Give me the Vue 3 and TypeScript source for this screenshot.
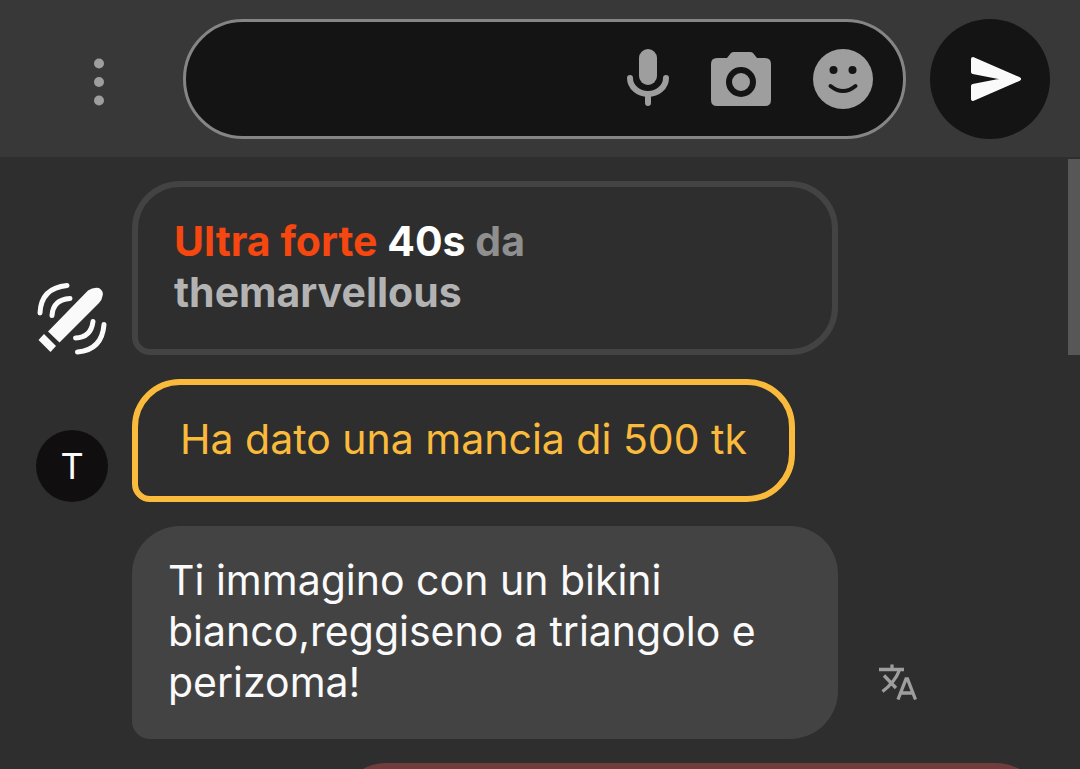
<script setup lang="ts">
import { ref } from 'vue'

const draft = ref('')
</script>

<template>
  <div class="page">
    <header class="bar">
      <button class="menu" type="button" aria-label="Menu">
        <svg width="48" height="60" viewBox="0 0 48 60">
          <g fill="#9e9e9e">
            <circle cx="24" cy="14.5" r="5" />
            <circle cx="24" cy="33" r="5" />
            <circle cx="24" cy="51.5" r="5" />
          </g>
        </svg>
      </button>
      <form class="field" @submit.prevent>
        <input v-model="draft" class="text" type="text" aria-label="Messaggio" />
        <button class="tool" type="button" aria-label="Microfono">
          <svg width="42" height="60" viewBox="9 0 42 60">
            <rect x="21" y="0" width="18" height="36" rx="9" fill="#9e9e9e" />
            <path d="M12 29a18 16 0 0 0 36 0M30 46v8" fill="none" stroke="#9e9e9e" stroke-width="6" stroke-linecap="round" />
          </svg>
        </button>
        <button class="tool" type="button" aria-label="Fotocamera">
          <svg width="60" height="60" viewBox="0 0 60 60">
            <path d="M6 9h10l4-5q1-1 3-1h16q2 0 3 1l4 5h8q6 0 6 6v36q0 6-6 6H6q-6 0-6-6V15q0-6 6-6z" fill="#9e9e9e" />
            <circle cx="30" cy="33" r="12" fill="none" stroke="#141414" stroke-width="6" />
          </svg>
        </button>
        <button class="tool" type="button" aria-label="Emoji">
          <svg width="60" height="60" viewBox="0 0 60 60">
            <circle cx="30" cy="30" r="30" fill="#9e9e9e" />
            <circle cx="20.5" cy="21" r="4" fill="#141414" />
            <circle cx="39.5" cy="21" r="4" fill="#141414" />
            <path d="M17.5 37q12.500 10 25 0" fill="none" stroke="#141414" stroke-width="4" stroke-linecap="round" />
          </svg>
        </button>
      </form>
      <button class="send" type="button" aria-label="Invia">
        <svg width="120" height="120" viewBox="0 0 120 120">
          <path d="M43 40L89 60L43 80V67L79 60L43 53z" fill="#fafafa" stroke="#fafafa" stroke-width="4" stroke-linejoin="round" />
        </svg>
      </button>
    </header>

    <main class="chat">
      <div class="messages">
        <article class="row">
          <svg class="badge" width="72" height="72" viewBox="0 0 72 72">
            <g fill="#fafafa">
              <path d="M12 48.500L52 7.500Q57 4 63 5Q68 8 66.500 13Q66 17 63 20L23.500 59.500z" />
              <path d="M8 51L20 63L14.500 69L2.500 57z" />
            </g>
            <g fill="none" stroke="#fafafa" stroke-width="5" stroke-linecap="round">
              <path d="M4 30Q5 5 31 2.500M16 32.500Q17 16.500 34 15.500M57 38.500Q55 54.500 39.500 55M68 41.500Q66 67 41.500 69" />
            </g>
          </svg>
          <p class="bubble toy"><strong class="level">Ultra forte</strong> <strong class="time">40s</strong> <span class="from">da</span> <strong>themarvellous</strong></p>
        </article>
        <article class="row">
          <span class="avatar">T</span>
          <p class="bubble tip">Ha dato una mancia di 500 tk</p>
        </article>
        <article class="row">
          <p class="bubble plain">Ti immagino con un bikini bianco,reggiseno a triangolo e perizoma!</p>
          <button class="translate" type="button" aria-label="Traduci">
            <svg width="40" height="36" viewBox="0 0 40 36">
              <path d="M1 5.500H26M14 0.500V5M21.500 6Q17 18 4.500 27.500M6 11.500L18 24M20 35.500L28 15H29.500L37.500 35.500M22.500 29H35" fill="none" stroke="#9e9e9e" stroke-width="3.300" />
            </svg>
          </button>
        </article>
        <article class="own" />
      </div>
      <div class="track"><div class="thumb" /></div>
    </main>
  </div>
</template>

<style>
body {
  margin: 0;
  background: #2e2e2e;
}
</style>

<style scoped>
.page {
  display: flex;
  flex-direction: column;
  height: 100vh;
  overflow: hidden;
  background: #2e2e2e;
  color: #fafafa;
  font-family: Inter, "Liberation Sans", sans-serif;
  font-size: 41px;
  line-height: 51px;
}

button {
  padding: 0;
  border: 0;
  background: none;
  cursor: pointer;
}

svg {
  display: block;
}

.bar {
  display: flex;
  flex: none;
  align-items: center;
  gap: 24px;
  padding: 19px 30px 18px 75px;
  background: #383838;
}

.menu {
  margin-right: 36px;
}

.field {
  display: flex;
  flex: 1;
  align-items: center;
  gap: 42px;
  min-width: 0;
  height: 120px;
  box-sizing: border-box;
  padding: 0 30px;
  border: 3px solid #858585;
  border-radius: 60px;
  background: #141414;
}

.text {
  flex: 1;
  min-width: 0;
  padding: 0;
  border: 0;
  outline: 0;
  background: none;
  color: inherit;
  font: inherit;
}

.send {
  border-radius: 50%;
  background: #141414;
}

.chat {
  display: flex;
  flex: 1;
  min-height: 0;
}

.messages {
  display: flex;
  flex: 1;
  flex-direction: column;
  gap: 24px;
  min-width: 0;
  padding: 24px 0 0 36px;
  overflow: hidden;
}

.row {
  display: grid;
  flex: none;
  grid-template-columns: 72px minmax(0, 1fr) 206px;
  column-gap: 24px;
  align-items: end;
}

.avatar {
  width: 72px;
  border-radius: 50%;
  background: #100e0f;
  font-size: 36px;
  line-height: 72px;
  text-align: center;
}

.bubble {
  grid-column: 2;
  justify-self: start;
  margin: 0;
  padding: 29px 36px 31px;
  border-radius: 48px 48px 48px 18px;
}

.toy {
  border: 6px solid #434343;
  color: #b3b3b3;
  font-weight: 700;
}

.toy strong {
  font-weight: inherit;
}

.level {
  color: #f5470f;
}

.time {
  color: #ffffff;
}

.from {
  color: #8f8f8f;
}

.tip {
  padding: 29px 42px 31px;
  border: 6px solid #fabb3c;
  color: #fabb3c;
}

.plain {
  background: #434343;
}

.translate {
  justify-self: start;
  margin: 0 0 39px 16px;
}

.own {
  flex: none;
  align-self: flex-end;
  width: 706px;
  height: 111px;
  margin-right: 24px;
  border-radius: 48px 48px 18px 48px;
  background: #703c3c;
}

.track {
  flex: none;
  width: 12px;
  padding-top: 2px;
}

.thumb {
  height: 196px;
  background: #575757;
}
</style>
